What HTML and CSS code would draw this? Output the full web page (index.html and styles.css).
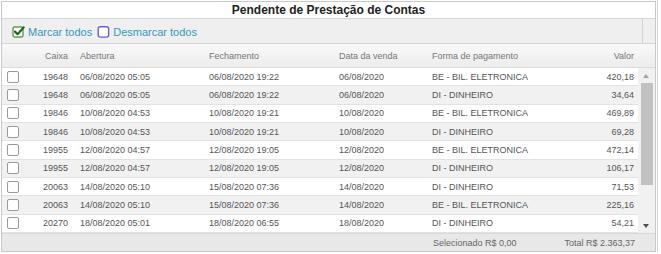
FILE: index.html
```html
<!DOCTYPE html>
<html lang="pt">
<head>
<meta charset="utf-8">
<title>Pendente de Prestação de Contas</title>
<link rel="stylesheet" href="styles.css">
</head>
<body>
<div class="frame">
  <div class="panel">
    <div class="title">Pendente de Prestação de Contas</div>
    <div class="toolbar">
      <div class="tools">
        <span class="tool">
          <svg class="ico" width="13" height="13" viewBox="0 0 13 13">
            <rect x="1" y="2" width="10" height="10" rx="1.5" fill="#fff" stroke="#5f9f4f" stroke-width="1.4"/>
            <path d="M3 6.6 L5.6 9.2 L11.6 2.4" fill="none" stroke="#27612a" stroke-width="2.2" stroke-linecap="round" stroke-linejoin="round"/>
          </svg>
          <span class="tlabel">Marcar todos</span>
        </span>
        <span class="tool">
          <svg class="ico" width="13" height="13" viewBox="0 0 13 13">
            <rect x="1.2" y="1.7" width="10.4" height="10.4" rx="2" fill="#fff" stroke="#6a5cd8" stroke-width="1.4"/>
          </svg>
          <span class="tlabel">Desmarcar todos</span>
        </span>
      </div>
      <div class="tcell"></div>
    </div>
    <div class="grid-head">
      <div class="c chk"></div>
      <div class="c caixa">Caixa</div>
      <div class="c ab">Abertura</div>
      <div class="c fe">Fechamento</div>
      <div class="c dv">Data da venda</div>
      <div class="c fp">Forma de pagamento</div>
      <div class="c val">Valor</div>
    </div>
    <div class="grid-body">
      <div class="rows">
        <div class="row"><div class="c chk"><span class="box"></span></div><div class="c caixa">19648</div><div class="c ab">06/08/2020 05:05</div><div class="c fe">06/08/2020 19:22</div><div class="c dv">06/08/2020</div><div class="c fp">BE - BIL. ELETRONICA</div><div class="c val">420,18</div></div>
        <div class="row alt"><div class="c chk"><span class="box"></span></div><div class="c caixa">19648</div><div class="c ab">06/08/2020 05:05</div><div class="c fe">06/08/2020 19:22</div><div class="c dv">06/08/2020</div><div class="c fp">DI - DINHEIRO</div><div class="c val">34,64</div></div>
        <div class="row"><div class="c chk"><span class="box"></span></div><div class="c caixa">19846</div><div class="c ab">10/08/2020 04:53</div><div class="c fe">10/08/2020 19:21</div><div class="c dv">10/08/2020</div><div class="c fp">BE - BIL. ELETRONICA</div><div class="c val">469,89</div></div>
        <div class="row alt"><div class="c chk"><span class="box"></span></div><div class="c caixa">19846</div><div class="c ab">10/08/2020 04:53</div><div class="c fe">10/08/2020 19:21</div><div class="c dv">10/08/2020</div><div class="c fp">DI - DINHEIRO</div><div class="c val">69,28</div></div>
        <div class="row"><div class="c chk"><span class="box"></span></div><div class="c caixa">19955</div><div class="c ab">12/08/2020 04:57</div><div class="c fe">12/08/2020 19:05</div><div class="c dv">12/08/2020</div><div class="c fp">BE - BIL. ELETRONICA</div><div class="c val">472,14</div></div>
        <div class="row alt"><div class="c chk"><span class="box"></span></div><div class="c caixa">19955</div><div class="c ab">12/08/2020 04:57</div><div class="c fe">12/08/2020 19:05</div><div class="c dv">12/08/2020</div><div class="c fp">DI - DINHEIRO</div><div class="c val">106,17</div></div>
        <div class="row"><div class="c chk"><span class="box"></span></div><div class="c caixa">20063</div><div class="c ab">14/08/2020 05:10</div><div class="c fe">15/08/2020 07:36</div><div class="c dv">14/08/2020</div><div class="c fp">DI - DINHEIRO</div><div class="c val">71,53</div></div>
        <div class="row alt"><div class="c chk"><span class="box"></span></div><div class="c caixa">20063</div><div class="c ab">14/08/2020 05:10</div><div class="c fe">15/08/2020 07:36</div><div class="c dv">14/08/2020</div><div class="c fp">BE - BIL. ELETRONICA</div><div class="c val">225,16</div></div>
        <div class="row"><div class="c chk"><span class="box"></span></div><div class="c caixa">20270</div><div class="c ab">18/08/2020 05:01</div><div class="c fe">18/08/2020 06:55</div><div class="c dv">18/08/2020</div><div class="c fp">DI - DINHEIRO</div><div class="c val">54,21</div></div>
      </div>
      <div class="scrollbar">
        <div class="arrow up"></div>
        <div class="thumb"></div>
        <div class="track"></div>
        <div class="arrow down"></div>
      </div>
    </div>
    <div class="footer">
      <span class="sel">Selecionado R$ 0,00</span>
      <span class="tot">Total R$ 2.363,37</span>
    </div>
  </div>
</div>
</body>
</html>
```

FILE: styles.css
```css
* { box-sizing: border-box; }
html, body { margin: 0; padding: 0; background: #fff; }
body { font-family: "Liberation Sans", Arial, sans-serif; }

.frame {
  width: 658px;
  padding: 1px 0 0 1px;
  border-right: 1px solid #d4d4d4;
}

.panel {
  width: 655px;
  height: 251px;
  border: 1px solid #c9c9c9;
  display: flex;
  flex-direction: column;
  background: #fff;
}

.title {
  height: 17px;
  line-height: 16px;
  text-align: center;
  font-weight: bold;
  font-size: 12px;
  color: #222;
  border-bottom: 1px solid #d6d6d6;
}

.toolbar {
  height: 25px;
  display: flex;
  background: #efefef;
  border-bottom: 1px solid #d6d6d6;
}
.tools {
  flex: 1;
  display: flex;
  align-items: center;
  gap: 5px;
  padding-left: 10px;
  padding-top: 1px;
}
.tool { display: flex; align-items: center; gap: 3px; }
.ico { display: block; }
.tlabel { font-size: 11px; color: #3598bd; }
.tcell {
  width: 13px;
  border-left: 1px solid #d2d2d2;
}

.grid-head, .row {
  display: grid;
  grid-template-columns: 28px 40px 139px 130px 93px 128px 78px;
  align-items: center;
  font-size: 9px;
}
.grid-head {
  height: 24px;
  color: #777;
  background: linear-gradient(#f9f9f9, #ececec);
  border-bottom: 1px solid #dcdcdc;
  padding-right: 17px;
}
.c { white-space: nowrap; }
.caixa { text-align: right; padding-right: 2px; }
.ab { padding-left: 10px; }
.val { text-align: right; padding-right: 4px; }

.grid-body {
  display: flex;
  height: 165px;
}
.rows { width: 636px; }
.row {
  height: 18.333px;
  color: #555;
  border-bottom: 1px solid #e2e2e2;
  background: #fff;
}
.row.alt { background: #f1f1f1; }
.chk { display: flex; align-items: center; padding-left: 5px; }
.box {
  width: 12px;
  height: 12px;
  border: 1px solid #9a9a9a;
  border-radius: 2px;
  background: #fff;
}

.scrollbar {
  width: 17px;
  display: flex;
  flex-direction: column;
  background: #f1f1f1;
}
.arrow { height: 15px; position: relative; }
.arrow::after {
  content: "";
  position: absolute;
  left: 5px;
  top: 6px;
  border-left: 3.5px solid transparent;
  border-right: 3.5px solid transparent;
}
.arrow.up::after { border-bottom: 4px solid #a3a3a3; }
.arrow.down::after { border-top: 4px solid #505050; top: 6px; }
.thumb {
  height: 102px;
  margin: 0 2px 0 3px;
  background: #c1c1c1;
}
.track { flex: 1; }

.footer {
  flex: 1;
  display: flex;
  align-items: center;
  padding-left: 431px;
  padding-right: 20px;
  font-size: 9px;
  color: #666;
  background: #e8e8e8;
  border-top: 1px solid #d8d8d8;
}
.tot { margin-left: auto; }
```
